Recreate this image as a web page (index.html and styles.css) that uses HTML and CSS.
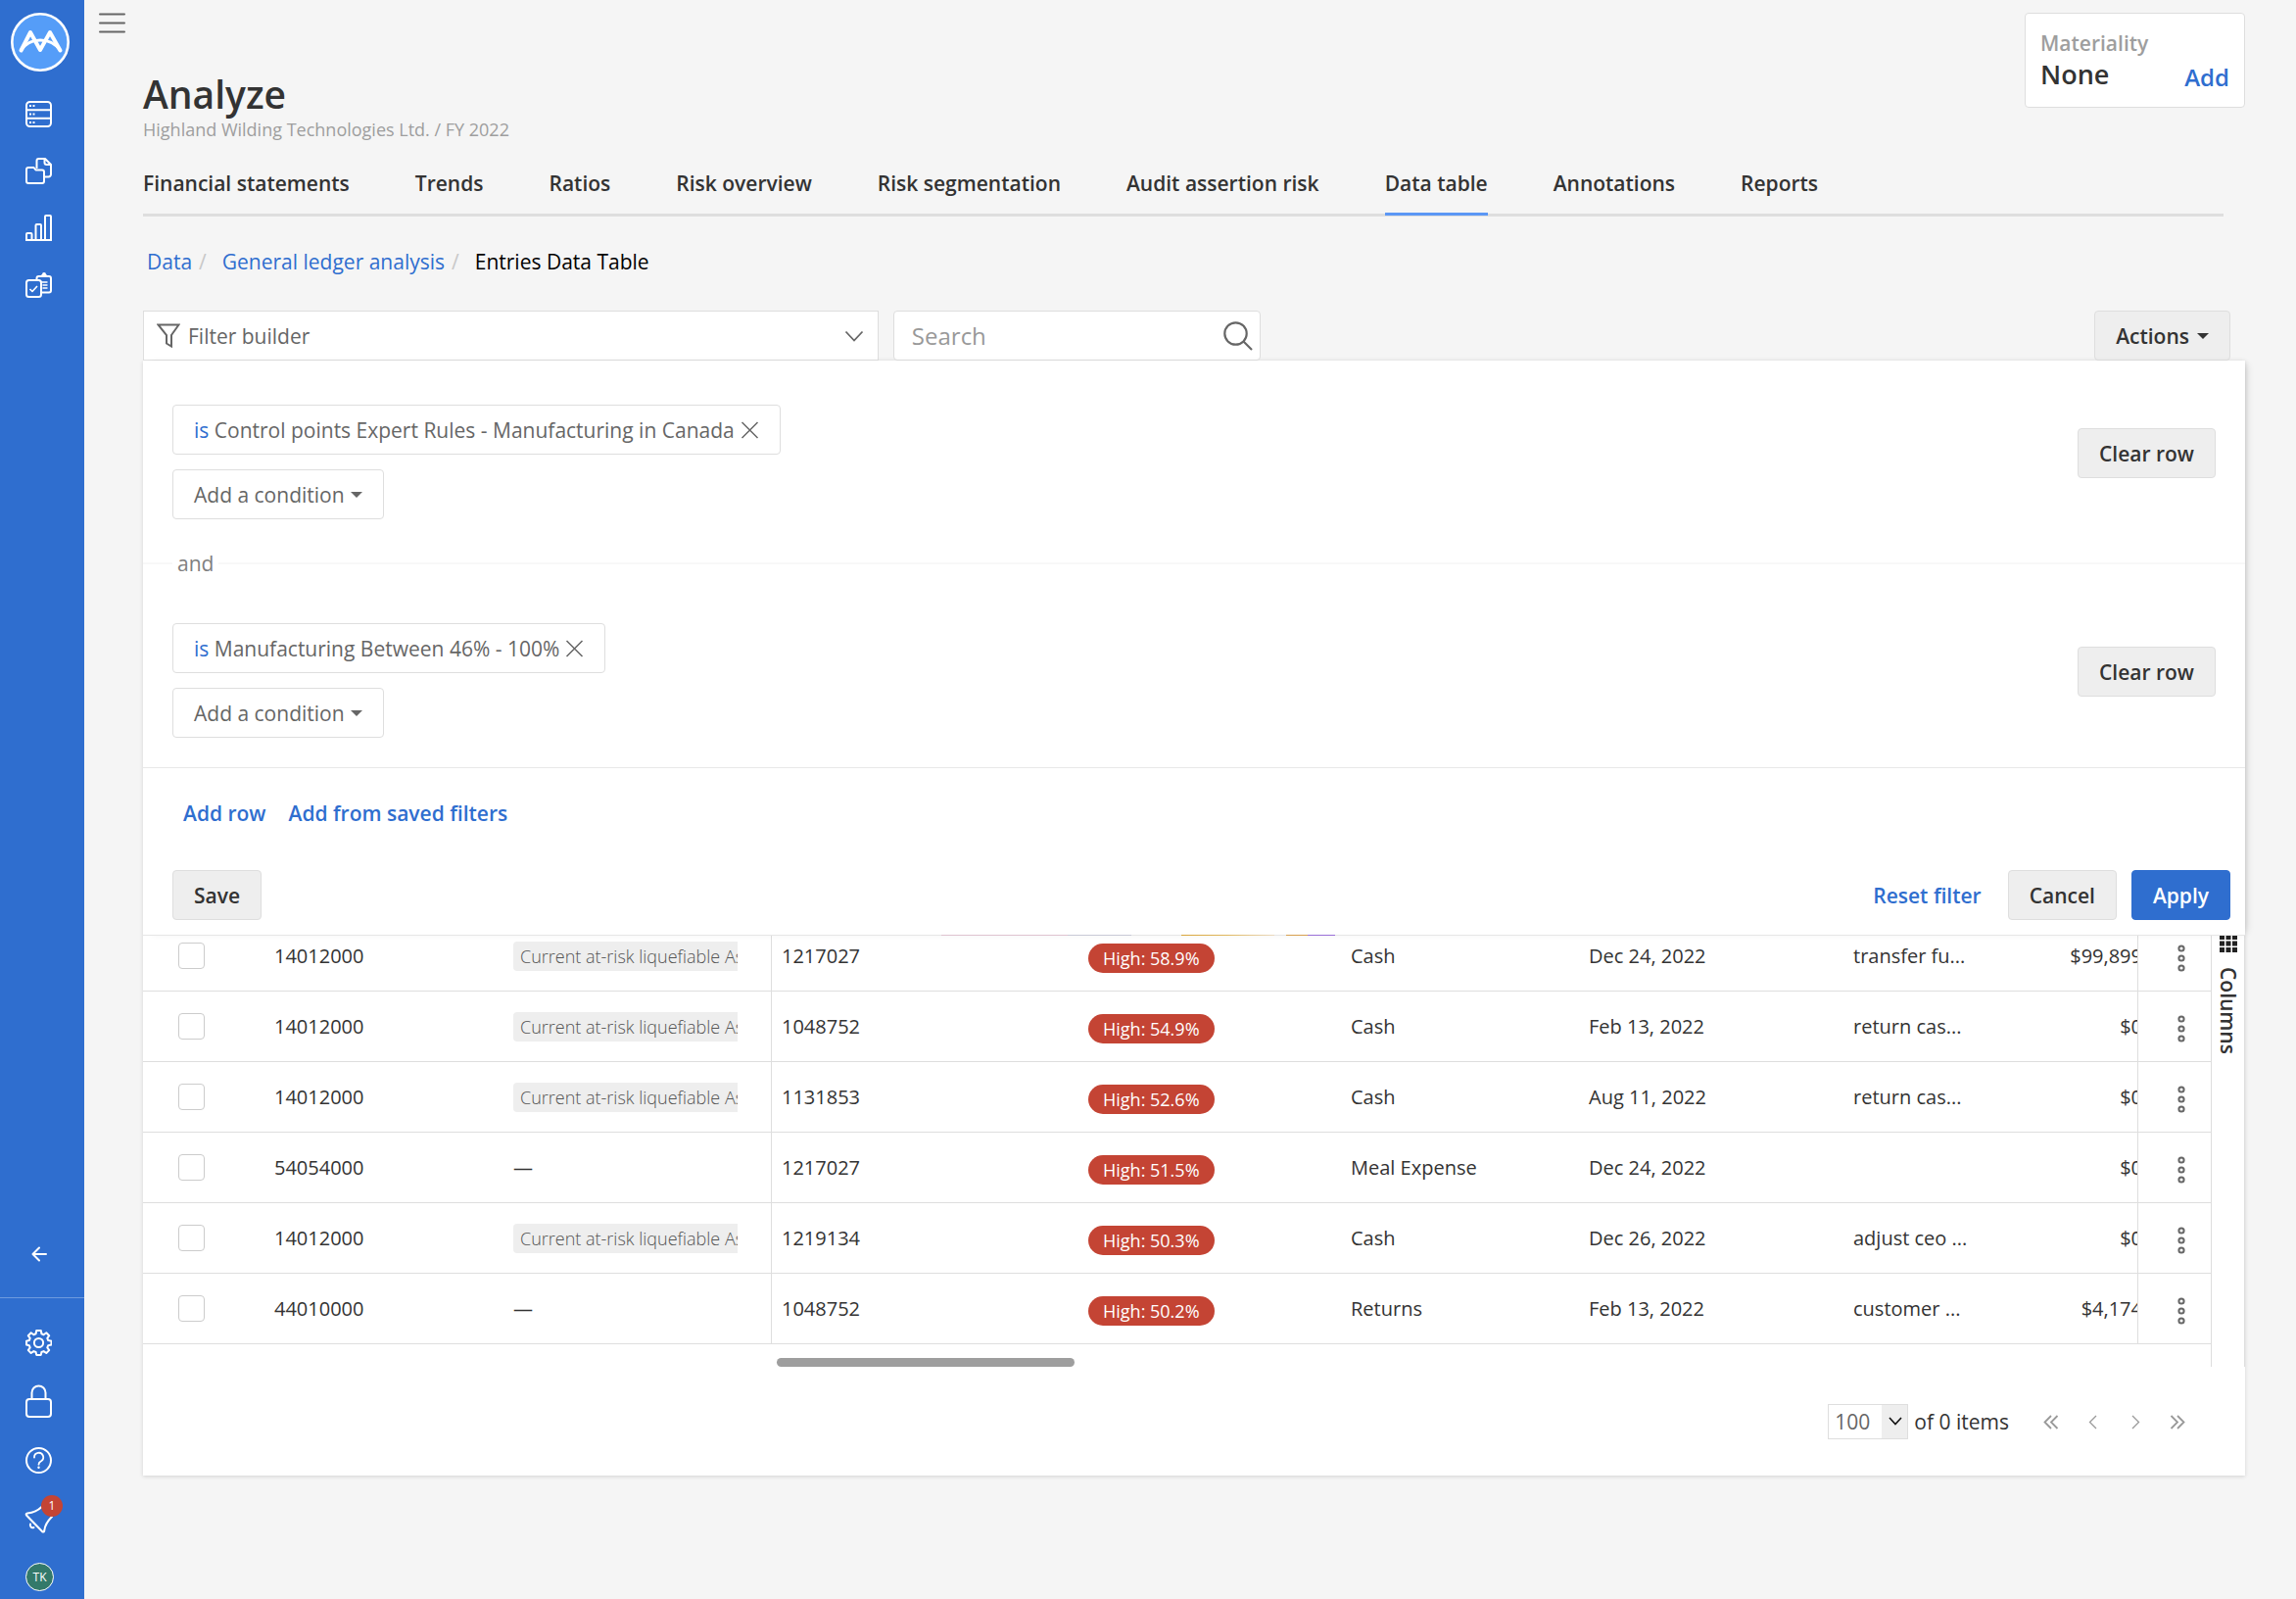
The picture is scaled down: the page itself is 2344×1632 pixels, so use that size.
FILE: index.html
```html
<!DOCTYPE html>
<html lang="en">
<head>
<meta charset="utf-8">
<meta name="viewport" content="width=device-width, initial-scale=1">
<title>Analyze - Entries Data Table</title>
<link rel="stylesheet" href="styles.css">
</head>
<body>
<svg class="sprite" aria-hidden="true">
  <symbol id="i-dots" viewBox="0 0 8 28"><g fill="none" stroke="#666" stroke-width="2"><circle cx="4" cy="4" r="2.6"/><circle cx="4" cy="14" r="2.6"/><circle cx="4" cy="24" r="2.6"/></g></symbol>
  <symbol id="i-close" viewBox="0 0 18 18"><path d="M1 1l16 16M17 1L1 17" fill="none" stroke="#666" stroke-width="1.5"/></symbol>
</svg>
<aside class="sidebar">
  <a class="logo" href="#" aria-label="Home">
    <svg viewBox="0 0 60 60"><circle cx="30" cy="30" r="28.7" fill="#559df8" stroke="#fff" stroke-width="2.6"/><g fill="none" stroke="#fff" stroke-linecap="round" stroke-linejoin="round"><path d="M10.500 38.500L20 20L30 38L40 20L50.500 38.500" stroke-width="4"/><path d="M10.500 38.500C19 24.500 41 24.500 50.500 38.500" stroke-width="2.800"/></g></svg>
  </a>
  <nav class="side-nav" aria-label="Main">
    <a href="#" aria-label="Engagements"><svg viewBox="0 0 27 27"><g fill="none" stroke="#fff" stroke-width="2"><rect x="1" y="1" width="25" height="25" rx="3.500"/><path d="M1 9.300h25M1 17.700h25"/></g><path d="M4 4h2v2H4zM7.500 4h2v2h-2zM4 12.500h2v2H4zM7.500 12.500h2v2h-2zM4 21h2v2H4zM7.500 21h2v2h-2z" fill="#fff"/></svg></a>
    <a href="#" aria-label="Files"><svg viewBox="0 0 27 27"><g fill="none" stroke="#fff" stroke-width="2" stroke-linejoin="round"><path d="M11.500 11V3a2 2 0 0 1 2-2H20l6 6v10a2.500 2.500 0 0 1-2.500 2.500H19.500M19.500 1v4a2 2 0 0 0 2 2H26"/><path d="M1 12a2 2 0 0 1 2-2h5.500l2 2.500H17a2 2 0 0 1 2 2V24a2 2 0 0 1-2 2H3a2 2 0 0 1-2-2z"/></g></svg></a>
    <a href="#" aria-label="Analysis"><svg viewBox="0 0 27 27"><g fill="none" stroke="#fff" stroke-width="2" stroke-linejoin="round"><path d="M0 26h27"/><path d="M1 26v-6a1 1 0 0 1 1-1h3.500a1 1 0 0 1 1 1v6M10.500 26V11a1 1 0 0 1 1-1h3.500a1 1 0 0 1 1 1v15M20 26V2a1 1 0 0 1 1-1h4a1 1 0 0 1 1 1v24"/></g></svg></a>
    <a href="#" aria-label="Tasks"><svg viewBox="0 0 27 27"><g fill="none" stroke="#fff" stroke-width="2" stroke-linejoin="round"><rect x="1" y="9" width="15" height="17" rx="2.500"/><path d="M11.500 9V7a2 2 0 0 1 2-2H24a2 2 0 0 1 2 2v12.500a2 2 0 0 1-2 2h-8"/><path d="M4.500 18l2.500 2.500L12 15" stroke-width="1.600"/><path d="M16 11h6.500M17.500 14h5M17.500 17h5" stroke-width="1.500"/></g><path d="M13.500 5.500L17 3a2 2 0 0 1 4 0l3 2.500z" fill="#fff"/></svg></a>
  </nav>
  <div class="side-collapse"><button type="button" aria-label="Collapse menu"><svg class="arrow" viewBox="0 0 16 16"><path d="M15 8H1.500M8 1.500L1.500 8L8 14.500" fill="none" stroke="#fff" stroke-width="2" stroke-linecap="round" stroke-linejoin="round"/></svg></button></div>
  <div class="side-tools">
    <a href="#" aria-label="Settings"><svg viewBox="0 0 27 27"><g fill="none" stroke="#fff" stroke-width="2" stroke-linejoin="round"><circle cx="13.500" cy="13.500" r="4.600"/><path d="M11.200 1h4.600l.6 3.300 2.200.9 2.700-1.900 2.900 2.900-1.900 2.700.9 2.200 3.300.6v3.900l-3.300.6-.9 2.200 1.900 2.700-2.900 2.900-2.700-1.900-2.200.9-.6 2.900h-4.600l-.6-2.900-2.200-.9-2.700 1.900-2.900-2.900 1.900-2.700-.9-2.200L1 15.600v-3.900l2.800-.6.9-2.200-1.900-2.700 2.900-2.900 2.700 1.900 2.200-.9z"/></g></svg></a>
    <a href="#" aria-label="Security"><svg class="lock" viewBox="0 0 27 34"><g fill="none" stroke="#fff" stroke-width="2"><rect x="1" y="15" width="25" height="18" rx="3"/><path d="M6.500 15V8.500a7 7 0 0 1 14 0V15"/></g></svg></a>
    <a href="#" aria-label="Help"><svg viewBox="0 0 27 27"><circle cx="13.500" cy="13.500" r="12.500" fill="none" stroke="#fff" stroke-width="2"/><path d="M9 10.500a4.600 4.600 0 1 1 7 3.800c-1.800 1-2.500 1.700-2.500 3.400" fill="none" stroke="#fff" stroke-width="1.800" stroke-linecap="round"/><circle cx="13.500" cy="20.700" r="1.200" fill="#fff"/></svg></a>
    <a class="news" href="#" aria-label="News"><svg class="horn" viewBox="0 0 29 29"><g fill="none" stroke="#fff" stroke-width="2" stroke-linejoin="round" stroke-linecap="round"><path d="M2 10.500L18.500 27.500Q20 28 20.300 26Q21 19 28 12Q29 10 27 8L22 2Q20 .5 17.500 2Q12 7.500 3 8.500Q1 9 2 10.500z"/><path d="M6 19.500c-.8 2.500 1.200 4.500 3.500 3.500"/></g></svg><span class="badge">1</span></a>
  </div>
  <button class="avatar" type="button">TK</button>
</aside>
<main class="main">
  <header class="topbar">
    <button class="menu" type="button" aria-label="Toggle menu"><svg viewBox="0 0 27 21"><path d="M1 1.500h25M1 10.500h25M1 19.500h25" stroke="#666" stroke-width="2" stroke-linecap="round"/></svg></button>
    <div class="heading">
      <h1>Analyze</h1>
      <p>Highland Wilding Technologies Ltd. / FY 2022</p>
    </div>
    <section class="materiality">
      <p class="mat-label">Materiality</p>
      <div class="mat-row"><strong>None</strong><a href="#">Add</a></div>
    </section>
  </header>
  <div class="content">
    <nav class="tabs" aria-label="Analyze sections">
      <a href="#">Financial statements</a>
      <a href="#">Trends</a>
      <a href="#">Ratios</a>
      <a href="#">Risk overview</a>
      <a href="#">Risk segmentation</a>
      <a href="#">Audit assertion risk</a>
      <a class="active" href="#" aria-current="page">Data table</a>
      <a href="#">Annotations</a>
      <a href="#">Reports</a>
    </nav>
    <nav class="crumbs" aria-label="Breadcrumb">
      <a href="#">Data</a><span class="sep">/</span>
      <a href="#">General ledger analysis</a><span class="sep">/</span>
      <span class="here">Entries Data Table</span>
    </nav>
    <div class="toolbar">
      <button class="filter-toggle" type="button" aria-expanded="true">
        <svg class="funnel" viewBox="0 0 24 25"><path d="M1.500 1.500h21l-7.500 10.500v11.500l-5-3V12z" fill="none" stroke="#666" stroke-width="2"/></svg>
        <span>Filter builder</span>
        <svg class="chevron" viewBox="0 0 20 12"><path d="M1.500 1.500L10 10.500L18.500 1.500" fill="none" stroke="#666" stroke-width="1.800"/></svg>
      </button>
      <div class="search">
        <input type="search" placeholder="Search" aria-label="Search">
        <svg viewBox="0 0 30 30"><circle cx="12.500" cy="12.500" r="11.200" fill="none" stroke="#666" stroke-width="2.200"/><path d="M20.500 20.500L29 29" stroke="#666" stroke-width="2.200"/></svg>
      </div>
      <button class="btn actions" type="button">Actions <span class="caret"></span></button>
    </div>
    <section class="card">
      <form class="filters">
        <div class="filter-row">
          <div class="conditions">
            <button class="chip" type="button"><span><em>is</em> Control points Expert Rules - Manufacturing in Canada</span><svg class="x"><use href="#i-close"/></svg></button>
            <button class="chip" type="button">Add a condition<span class="caret"></span></button>
          </div>
          <button class="btn" type="button">Clear row</button>
        </div>
        <div class="joiner"><span>and</span></div>
        <div class="filter-row">
          <div class="conditions">
            <button class="chip" type="button"><span><em>is</em> Manufacturing Between 46% - 100%</span><svg class="x"><use href="#i-close"/></svg></button>
            <button class="chip" type="button">Add a condition<span class="caret"></span></button>
          </div>
          <button class="btn" type="button">Clear row</button>
        </div>
        <div class="add-links"><a href="#">Add row</a><a href="#">Add from saved filters</a></div>
        <div class="form-actions">
          <button class="btn save" type="button">Save</button>
          <a href="#">Reset filter</a>
          <button class="btn" type="button">Cancel</button>
          <button class="btn primary" type="submit">Apply</button>
        </div>
        <div class="peek"></div>
      </form>
      <div class="grid">
        <div class="grid-main">
          <table>
            <colgroup><col class="c-check"><col class="c-num"><col class="c-tag"><col class="c-entry"><col class="c-risk"><col class="c-acct"><col class="c-date"><col class="c-desc"><col><col class="c-menu"></colgroup>
            <tbody>
              <tr><td class="check"><input type="checkbox" aria-label="Select entry"></td><td>14012000</td><td class="pin"><div class="clip"><span class="tag">Current at-risk liquefiable Assets</span></div></td><td>1217027</td><td><span class="pill">High: 58.9%</span></td><td>Cash</td><td>Dec 24, 2022</td><td>transfer fu...</td><td class="amount"><div>$99,899</div></td><td class="more"><button type="button" aria-label="Row menu"><svg><use href="#i-dots"/></svg></button></td></tr>
              <tr><td class="check"><input type="checkbox" aria-label="Select entry"></td><td>14012000</td><td class="pin"><div class="clip"><span class="tag">Current at-risk liquefiable Assets</span></div></td><td>1048752</td><td><span class="pill">High: 54.9%</span></td><td>Cash</td><td>Feb 13, 2022</td><td>return cas...</td><td class="amount"><div>$0</div></td><td class="more"><button type="button" aria-label="Row menu"><svg><use href="#i-dots"/></svg></button></td></tr>
              <tr><td class="check"><input type="checkbox" aria-label="Select entry"></td><td>14012000</td><td class="pin"><div class="clip"><span class="tag">Current at-risk liquefiable Assets</span></div></td><td>1131853</td><td><span class="pill">High: 52.6%</span></td><td>Cash</td><td>Aug 11, 2022</td><td>return cas...</td><td class="amount"><div>$0</div></td><td class="more"><button type="button" aria-label="Row menu"><svg><use href="#i-dots"/></svg></button></td></tr>
              <tr><td class="check"><input type="checkbox" aria-label="Select entry"></td><td>54054000</td><td class="pin">—</td><td>1217027</td><td><span class="pill">High: 51.5%</span></td><td>Meal Expense</td><td>Dec 24, 2022</td><td></td><td class="amount"><div>$0</div></td><td class="more"><button type="button" aria-label="Row menu"><svg><use href="#i-dots"/></svg></button></td></tr>
              <tr><td class="check"><input type="checkbox" aria-label="Select entry"></td><td>14012000</td><td class="pin"><div class="clip"><span class="tag">Current at-risk liquefiable Assets</span></div></td><td>1219134</td><td><span class="pill">High: 50.3%</span></td><td>Cash</td><td>Dec 26, 2022</td><td>adjust ceo ...</td><td class="amount"><div>$0</div></td><td class="more"><button type="button" aria-label="Row menu"><svg><use href="#i-dots"/></svg></button></td></tr>
              <tr><td class="check"><input type="checkbox" aria-label="Select entry"></td><td>44010000</td><td class="pin">—</td><td>1048752</td><td><span class="pill">High: 50.2%</span></td><td>Returns</td><td>Feb 13, 2022</td><td>customer ...</td><td class="amount"><div>$4,174</div></td><td class="more"><button type="button" aria-label="Row menu"><svg><use href="#i-dots"/></svg></button></td></tr>
            </tbody>
          </table>
          <div class="scroll"><div class="thumb"></div></div>
        </div>
        <button class="columns" type="button">
          <svg viewBox="0 0 18 18"><path d="M0 0h5v5H0zM6.500 0h5v5h-5zM13 0h5v5h-5zM0 6.500h5v5H0zM6.500 6.500h5v5h-5zM13 6.500h5v5h-5zM0 13h5v5H0zM6.500 13h5v5h-5zM13 13h5v5h-5z" fill="#222"/></svg>
          <span>Columns</span>
        </button>
      </div>
      <footer class="pager">
        <label class="page-size"><select aria-label="Items per page"><option>100</option></select><svg viewBox="0 0 14 9"><path d="M1 1l6 6.500L13 1" fill="none" stroke="#111" stroke-width="1.600"/></svg></label>
        <span>of 0 items</span>
        <div class="pages">
          <button type="button" aria-label="First page"><svg viewBox="0 0 16 15"><path d="M8 1L1.500 7.500L8 14M14.500 1L8 7.500L14.500 14" fill="none" stroke="#999" stroke-width="1.800"/></svg></button>
          <button type="button" aria-label="Previous page"><svg viewBox="0 0 16 15"><path d="M11 1L4.500 7.500L11 14" fill="none" stroke="#999" stroke-width="1.300"/></svg></button>
          <button type="button" aria-label="Next page"><svg viewBox="0 0 16 15"><path d="M5 1L11.500 7.500L5 14" fill="none" stroke="#999" stroke-width="1.300"/></svg></button>
          <button type="button" aria-label="Last page"><svg viewBox="0 0 16 15"><path d="M1.500 1L8 7.500L1.500 14M8 1L14.500 7.500L8 14" fill="none" stroke="#999" stroke-width="1.800"/></svg></button>
        </div>
      </footer>
    </section>
  </div>
</main>
</body>
</html>
```
FILE: styles.css
```css
:root {
  --blue: #2f6ecf;
  --ink: #333;
  --muted: #666;
  --soft: #9e9e9e;
  --line: #dedede;
  --fill: #eee;
}

* { box-sizing: border-box; }

body {
  display: flex;
  align-items: stretch;
  min-height: 100vh;
  margin: 0;
  background: #f5f5f5;
  color: var(--ink);
  font: 21px/28px "Open Sans", "Noto Sans", sans-serif;
}

h1, p { margin: 0; }
svg { display: block; flex: none; }
a { color: var(--blue); text-decoration: none; }
button { margin: 0; padding: 0; border: 0; background: none; color: inherit; font: inherit; cursor: pointer; }
.sprite { display: none; }

/* Sidebar */
.sidebar {
  position: sticky;
  top: 0;
  display: flex;
  flex: 0 0 86px;
  flex-direction: column;
  align-items: center;
  height: 100vh;
  padding: 13px 0 8px;
  background: var(--blue);
}
.logo { margin: 0 4px 14px 0; }
.logo svg { width: 60px; height: 60px; }
.side-nav, .side-tools, .side-collapse { display: flex; flex-direction: column; width: 100%; }
.side-nav a, .side-tools a, .side-collapse button {
  display: flex;
  align-items: center;
  justify-content: center;
  height: 60px;
  padding-right: 7px;
}
.side-nav a { height: 58px; }
.side-nav svg, .side-tools svg { width: 27px; height: 27px; }
.side-collapse { margin-top: auto; padding-bottom: 14px; border-bottom: 1px solid #6e9ade; }
.side-collapse .arrow { width: 16px; height: 16px; }
.side-tools { padding-top: 15px; }
.side-tools .lock { height: 34px; }
.side-tools .horn { width: 29px; height: 29px; }
.news { position: relative; }
.badge {
  position: absolute;
  top: 6px;
  left: 42px;
  width: 22px;
  height: 22px;
  border-radius: 50%;
  background: #c44434;
  color: #fff;
  font-size: 12px;
  line-height: 21px;
  text-align: center;
}
.avatar {
  flex: none;
  width: 29px;
  height: 29px;
  margin: 15px 5px 0 0;
  border: 1px solid #fff;
  border-radius: 50%;
  background: #33796a;
  color: #fff;
  font-size: 12px;
  line-height: 27px;
}

/* Page heading */
.main { flex: 1; min-width: 0; padding: 13px 52px 60px 15px; }
.topbar { display: flex; align-items: flex-start; }
.menu { width: 27px; margin-right: 18px; }
.menu svg { width: 27px; height: 21px; }
.heading { flex: 1; padding-top: 59px; }
h1 { font-size: 39px; font-weight: 600; line-height: 48px; }
.heading p { color: var(--soft); font-size: 18px; line-height: 25px; }
.materiality {
  width: 225px;
  padding: 17px 15px 14px;
  border: 1px solid var(--line);
  border-radius: 4px;
  background: #fff;
  font-weight: 600;
}
.mat-label { color: var(--soft); line-height: 26px; }
.mat-row { display: flex; justify-content: space-between; align-items: flex-end; font-size: 24px; line-height: 32px; }
.mat-row strong { font-size: 27px; font-weight: 600; line-height: 38px; }
.content { padding-left: 45px; }

.tabs {
  display: flex;
  gap: 67px;
  margin: 28px 22px 0 0;
  border-bottom: 3px solid var(--line);
  font-weight: 600;
}
.tabs a { margin-bottom: -2px; padding-bottom: 16px; border-bottom: 3px solid transparent; color: var(--ink); }
.tabs .active { border-color: #5b97f5; }

.crumbs { display: flex; margin: 32px 0 36px 4px; }
.crumbs .sep { margin: 0 16px 0 7px; color: #c8c8c8; }
.crumbs .here { color: #000; }

/* Toolbar */
.toolbar { display: flex; gap: 15px; height: 51px; padding-right: 15px; }
.filter-toggle {
  display: flex;
  flex: 0 0 calc(35% + 5px);
  align-items: center;
  gap: 8px;
  padding: 0 14px 0 13px;
  border: 1px solid var(--line);
  background: #fff;
  color: var(--muted);
}
.funnel { width: 24px; height: 25px; }
.chevron { width: 20px; height: 12px; margin-left: auto; }
.search {
  display: flex;
  flex: 0 0 375px;
  align-items: center;
  padding: 0 7px 0 18px;
  border: 1px solid var(--line);
  border-radius: 4px;
  background: #fff;
}
.search input { flex: 1; min-width: 0; padding: 0; border: 0; outline: 0; background: none; color: var(--ink); font: 24px/34px "Open Sans", sans-serif; }
.search input::placeholder { color: #999; opacity: 1; }
.search svg { width: 30px; height: 30px; }

.btn {
  height: 51px;
  padding: 0 21px;
  border: 1px solid var(--line);
  border-radius: 4px;
  background: var(--fill);
  color: var(--ink);
  font-weight: 600;
}
.btn.primary { border-color: var(--blue); background: var(--blue); color: #fff; }
.actions { display: flex; align-items: center; gap: 8px; margin-left: auto; }
.caret { border: 6px solid transparent; border-top-color: currentColor; border-bottom: 0; }

/* Filter builder */
.card { background: #fff; box-shadow: 0 1px 4px rgba(0, 0, 0, .14); }
.filters { position: relative; z-index: 1; padding-top: 45px; background: #fff; box-shadow: 5px 0 8px -4px rgba(0, 0, 0, .16); }
.filter-row { display: flex; justify-content: space-between; align-items: flex-start; padding: 0 30px; }
.filter-row .btn { margin-top: 24px; }
.conditions { display: flex; flex-direction: column; align-items: flex-start; gap: 15px; }
.chip {
  display: flex;
  align-items: center;
  gap: 6px;
  height: 51px;
  padding: 0 21px;
  border: 1px solid var(--line);
  border-radius: 4px;
  background: #fff;
  color: var(--muted);
}
.chip em { color: var(--blue); font-style: normal; }
.chip .x { width: 19px; height: 18px; }
.joiner { display: flex; align-items: center; margin: 31px 0 47px; color: #808080; }
.joiner::before, .joiner::after { content: ""; flex: 1; height: 2px; background: #f8f8f8; }
.joiner::before { flex: 0 0 30px; }
.joiner span { padding: 0 5px; }
.add-links {
  display: flex;
  gap: 23px;
  margin-top: 30px;
  padding: 32px 41px 44px;
  border-top: 1px solid #e8e8e8;
  font-weight: 600;
}
.form-actions { display: flex; align-items: center; gap: 15px; padding: 0 15px 15px 30px; }
.form-actions .save { margin-right: auto; }
.form-actions a { margin-right: 12px; font-weight: 600; }
.peek {
  height: 1px;
  background: linear-gradient(90deg, #e6e6e6 38%, #dfc4d0 38%, #dfc4d0 44%, #c8cad6 44%, #c8cad6 47%, #e6e6e6 47%, #e6e6e6 49.4%, #d9a63c 49.4%, #e0b860 51.6%, #ead9c0 53.800%, #e6e6e6 53.800%, #e6e6e6 54.4%, #d8a050 54.4%, #d8a050 55.4%, #9a70d8 55.4%, #9a70d8 56.7%, #e6e6e6 56.7%);
}

/* Data grid: its top edge slides under the open filter builder */
.grid { display: flex; margin-top: -15px; }
.grid-main { flex: 1; min-width: 0; }
table { width: 100%; border-collapse: separate; border-spacing: 0; table-layout: fixed; font-size: 20px; }
.c-check { width: 122px; }
.c-num { width: 244px; }
.c-tag { width: 276px; }
.c-entry { width: 311px; }
.c-risk { width: 268px; }
.c-acct { width: 243px; }
.c-date { width: 270px; }
.c-desc { width: 160px; }
.c-menu { width: 74px; }
td { height: 72px; padding: 0 12px; border-bottom: 1px solid var(--line); white-space: nowrap; }
td.check { padding-left: 36px; }
td.pin { padding-right: 34px; border-right: 1px solid var(--line); }
td.pin + td { padding-left: 10px; }
td.check input { display: block; appearance: none; width: 27px; height: 27px; margin: 0; border: 1px solid #ccc; border-radius: 4px; background: #fff; }
.clip { overflow: hidden; }
.tag { display: inline-block; padding: 0 7px; border-radius: 4px; background: var(--fill); color: #555; font-size: 18px; font-weight: 300; line-height: 30px; vertical-align: top; }
.pill { display: block; width: max-content; margin-top: 5px; padding: 0 15px; border-radius: 15px; background: #c44434; color: #fff; font-size: 18px; line-height: 30px; }
td.amount { overflow: hidden; padding: 0; border-right: 1px solid var(--line); text-align: right; }
td.amount div { margin-right: -5px; }
td.more { padding: 5px 0 0 40px; }
td.more button, td.more svg { display: block; width: 8px; height: 28px; }
.scroll { padding: 14px 0 0 647px; }
.thumb { width: 304px; height: 9px; border-radius: 5px; background: #9e9e9e; }
.columns {
  display: flex;
  flex: 0 0 35px;
  flex-direction: column;
  align-items: center;
  gap: 15px;
  padding-top: 14px;
  border: solid var(--line);
  border-width: 0 1px;
}
.columns svg { width: 18px; height: 18px; }
.columns span { font-weight: 600; line-height: 28px; writing-mode: vertical-rl; }

/* Pager */
.pager { display: flex; align-items: center; padding: 38px 61px 37px; justify-content: flex-end; }
.page-size { position: relative; width: 82px; height: 36px; margin-right: 6px; }
.page-size select {
  display: block;
  appearance: none;
  width: 100%;
  height: 100%;
  padding: 0 6px;
  border: 1px solid var(--line);
  border-radius: 0;
  background: linear-gradient(var(--fill), var(--fill)) right / 26px 100% no-repeat #fff;
  color: var(--muted);
  font: inherit;
}
.page-size svg { position: absolute; top: 13px; right: 6px; width: 14px; height: 9px; pointer-events: none; }
.pages { display: flex; gap: 27px; margin-left: 35px; }
.pages svg { width: 16px; height: 15px; }
```
